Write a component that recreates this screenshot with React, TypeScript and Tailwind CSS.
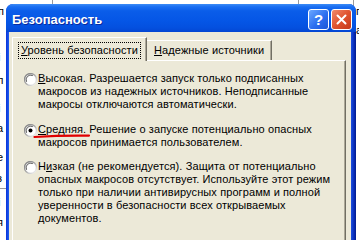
import React from "react";

const body = "font-['Liberation_Sans',Arial,sans-serif] text-[11px] leading-[13px] tracking-[0.1px] text-black";

function Radio({ checked }: { checked?: boolean }) {
  return (
    <svg width="13" height="13" viewBox="0 0 13 13" className="shrink-0">
      <defs>
        <linearGradient id={checked ? "rg1" : "rg0"} x1="0" y1="0" x2="1" y2="1">
          <stop offset="0" stopColor="#7a7a7a" />
          <stop offset="0.5" stopColor="#a9a9a9" />
          <stop offset="1" stopColor="#ffffff" />
        </linearGradient>
      </defs>
      <circle cx="6.5" cy="6.5" r="6" fill="#ffffff" stroke={`url(#${checked ? "rg1" : "rg0"})`} strokeWidth="1.4" />
      <path d="M2.6 8.8 A4.6 4.6 0 0 1 8.8 2.6" fill="none" stroke="#5a5a5a" strokeWidth="1" />
      {checked && <circle cx="6.5" cy="6.5" r="2" fill="#000000" />}
    </svg>
  );
}

function Option({ checked, lines, className }: { checked?: boolean; lines: React.ReactNode[]; className?: string }) {
  return (
    <div className={`relative flex items-start ${className ?? ""}`}>
      <div className="pt-[1px]">
        <Radio checked={checked} />
      </div>
      <div className="ml-[1px]">
        {lines.map((l, i) => (
          <div key={i} className="whitespace-nowrap">
            {l}
          </div>
        ))}
      </div>
    </div>
  );
}

export default function App() {
  return (
    <div className="relative h-[240px] w-[359px] overflow-hidden bg-white pl-[6px] pt-[4px]">
      {/* worksheet behind the dialog */}
      <div className={`absolute inset-0 ${body}`}>
        <div className="absolute left-[52px] top-0 h-[4px] w-px bg-[#9a9a9a]" />
        <div className="absolute left-[298px] top-0 h-[4px] w-px bg-[#9a9a9a]" />
        <div className="absolute left-[353px] top-0 h-[8px] w-px bg-[#9a9a9a]" />
        <div className="absolute left-0 top-[188px] h-px w-[6px] bg-[#9a9a9a]" />
        <span className="absolute left-[-2px] top-[5px]">п</span>
        <span className="absolute left-[-2px] top-[51px]">і</span>
        <span className="absolute left-[-3px] top-[74px]">л</span>
        <span className="absolute left-[-2px] top-[102px]">і</span>
        <span className="absolute left-[-3px] top-[122px]">а</span>
        <span className="absolute left-[-3px] top-[151px]">е</span>
        <span className="absolute left-[-3px] top-[172px]">з</span>
        <span className="absolute left-[-2px] top-[196px]">і</span>
        <span className="absolute left-[-3px] top-[216px]">я</span>
        <span className="absolute left-[356px] top-[5px]">п</span>
        <span className="absolute left-[356px] top-[24px]">а</span>
      </div>

      <div className="relative z-10 flex h-[260px] w-[350px] flex-col overflow-hidden rounded-t-[7px] bg-[#0831d9]">
        {/* title bar */}
        <div className="flex h-[28px] items-start bg-[linear-gradient(to_bottom,#3d8cf5_0%,#1a6ef2_10%,#0a5de9_25%,#0556e6_60%,#0450df_85%,#0446d2_100%)] pl-[6px] pr-[4px] pt-[5px]">
          <div className="mt-[3px] flex-1 font-['Liberation_Sans',Arial,sans-serif] text-[13px] font-bold leading-[15px] text-white [text-shadow:1px_1px_0_#0a2a9e]">
            Безопасность
          </div>
          <div className="flex h-[21px] w-[21px] items-center justify-center rounded-[3px] border border-white bg-[linear-gradient(135deg,#6aa8ff,#2d6ff0_55%,#1a56d8)] font-['Liberation_Sans',Arial,sans-serif] text-[15px] font-bold leading-none text-white">
            ?
          </div>
          <div className="ml-[2px] flex h-[21px] w-[21px] items-center justify-center rounded-[3px] border border-white bg-[linear-gradient(135deg,#f08a6c,#e0532f_50%,#c4391a)]">
            <svg width="11" height="11" viewBox="0 0 11 11">
              <path d="M1.5 1.5 L9.5 9.5 M9.5 1.5 L1.5 9.5" stroke="#ffffff" strokeWidth="2" strokeLinecap="round" />
            </svg>
          </div>
        </div>

        {/* frame + client area */}
        <div className="flex flex-1">
          <div className="w-[3px] bg-[linear-gradient(to_right,#0831d9,#1f5ff0)]" />
          <div className={`flex flex-1 flex-col bg-[#ece9d8] pl-[3px] pr-[5px] pt-[5px] ${body}`}>
            {/* tabs */}
            <div className="relative z-10 -mb-px flex h-[24px] items-end">
              <div className="flex h-[24px] w-[135px] items-start border-l border-r border-t border-l-white border-r-[#716f64] border-t-white bg-[#ece9d8] pl-[5px] pt-[4px] shadow-[inset_-1px_0_0_#aca899]">
                <div className="border border-dotted border-black px-[2px] py-px">
                  <u>У</u>ровень безопасности
                </div>
              </div>
              <div className="mb-px flex h-[20px] w-[125px] items-start border-r border-t border-r-[#716f64] border-t-white pl-[7px] pt-[3px] shadow-[inset_-1px_0_0_#aca899]">
                <span>
                  <u>Н</u>адежные источники
                </span>
              </div>
            </div>

            {/* panel */}
            <div className="flex-1 border-l border-r border-t border-l-white border-r-[#716f64] border-t-white pl-[11px] pt-[11px] shadow-[inset_-1px_0_0_#aca899]">
              <Option
                lines={[
                  <>
                    <u>В</u>ысокая. Разрешается запуск только подписанных
                  </>,
                  "макросов из надежных источников. Неподписанные",
                  "макросы отключаются автоматически.",
                ]}
              />
              <Option
                checked
                className="mt-[12px]"
                lines={[
                  <>
                    <u>С</u>редняя. Решение о запуске потенциально опасных
                  </>,
                  "макросов принимается пользователем.",
                ]}
              />
              <Option
                className="mt-[11px]"
                lines={[
                  <>
                    Н<u>и</u>зкая (не рекомендуется). Защита от потенциально
                  </>,
                  "опасных макросов отсутствует. Используйте этот режим",
                  "только при наличии антивирусных программ и полной",
                  "уверенности в безопасности всех открываемых",
                  "документов.",
                ]}
              />
            </div>
          </div>
          <div className="w-[5px] bg-[linear-gradient(to_right,#1a4fe0,#0a2cb8_60%,#001b8c)]" />
        </div>
      </div>

      {/* red pen mark under «Средняя» */}
      <svg className="absolute left-[33px] top-[133px] z-20" width="58" height="6" viewBox="0 0 58 6">
        <path d="M1.5 4 Q 28 2.2 56 2.6" fill="none" stroke="#e00000" strokeWidth="2.2" strokeLinecap="round" />
      </svg>
    </div>
  );
}
